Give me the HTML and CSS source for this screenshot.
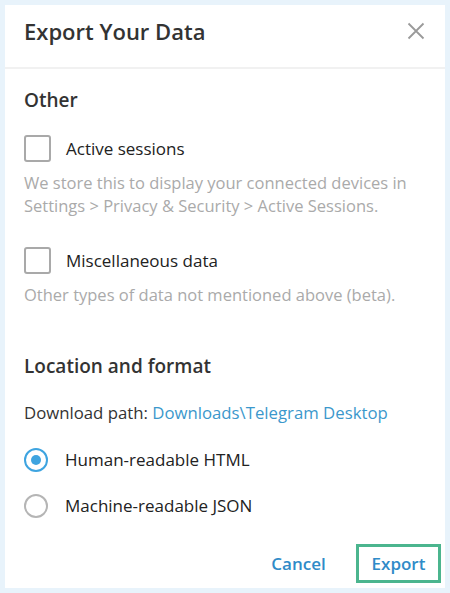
FILE: index.html
```html
<!DOCTYPE html>
<html>
<head>
<meta charset="utf-8">
<link rel="stylesheet" href="styles.css">
</head>
<body>
<div class="dialog">
  <div class="header">
    <h1 class="title">Export Your Data</h1>
    <svg class="close" width="18" height="18" viewBox="0 0 18 18"><path d="M1.5 1.5 L16.5 16.5 M16.5 1.5 L1.5 16.5" stroke="#9a9a9a" stroke-width="1.8" fill="none"/></svg>
  </div>
  <div class="body">
    <h2 class="section">Other</h2>
    <div class="option">
      <span class="checkbox"></span>
      <span class="label">Active sessions</span>
    </div>
    <p class="desc">We store this to display your connected devices in Settings &gt; Privacy &amp; Security &gt; Active Sessions.</p>
    <div class="option opt2">
      <span class="checkbox"></span>
      <span class="label">Miscellaneous data</span>
    </div>
    <p class="desc">Other types of data not mentioned above (beta).</p>

    <h2 class="section sec2">Location and format</h2>
    <div class="path">Download path: <span class="link">Downloads\Telegram Desktop</span></div>
    <div class="option radio-row">
      <span class="radio on"></span>
      <span class="label">Human-readable HTML</span>
    </div>
    <div class="option radio-row r2">
      <span class="radio"></span>
      <span class="label">Machine-readable JSON</span>
    </div>
  </div>
  <div class="footer">
    <button class="btn">Cancel</button>
    <button class="btn primary">Export</button>
  </div>
</div>
</body>
</html>
```
FILE: styles.css
```css
html, body { margin: 0; padding: 0; }
body {
  width: 450px;
  height: 593px;
  box-sizing: border-box;
  padding: 5px;
  background: #e8f3fb;
  font-family: "Open Sans", "Noto Sans", sans-serif;
  color: #222;
}
.dialog {
  background: #fff;
  height: 583px;
  display: flex;
  flex-direction: column;
}
.header {
  height: 64px;
  border-bottom: 2px solid #f1f1f1;
  display: flex;
  align-items: center;
  justify-content: space-between;
  padding: 0 20px 11px 19px;
  box-sizing: border-box;
  flex: none;
}
.title {
  margin: 0;
  font-size: 22px;
  font-weight: 600;
  color: #333;
}
.body {
  padding: 18px 19px 0 19px;
  flex: 1;
}
.section {
  margin: 0;
  font-size: 19px;
  font-weight: 600;
  color: #333;
  line-height: 26px;
}
.option {
  display: flex;
  align-items: center;
  margin-top: 22px;
  height: 27px;
}
.opt2 { margin-top: 30px; }
.checkbox {
  width: 23px;
  height: 23px;
  border: 2px solid #a9a9a9;
  border-radius: 3px;
  flex: none;
}
.label {
  margin-left: 15px;
  font-size: 17px;
  color: #222;
}
.desc {
  margin: 9px 0 0 0;
  font-size: 16.5px;
  line-height: 23px;
  color: #aaa;
}
.sec2 { margin-top: 47px; }
.path {
  margin-top: 22px;
  font-size: 16.75px;
  line-height: 23px;
  color: #333;
}
.link { color: #3b98cc; }
.radio-row { margin-top: 22px; }
.r2 { margin-top: 19px; }
.radio {
  width: 20px;
  height: 20px;
  border: 2px solid #b5b5b5;
  border-radius: 50%;
  flex: none;
  position: relative;
}
.radio.on { border-color: #3ea4e0; }
.radio.on::after {
  content: "";
  position: absolute;
  left: 5px; top: 5px;
  width: 10px; height: 10px;
  border-radius: 50%;
  background: #3ea4e0;
}
.radio-row .label { margin-left: 17px; }
.footer {
  display: flex;
  justify-content: flex-end;
  align-items: center;
  gap: 15px;
  padding: 0 4px 5px 0;
  flex: none;
}
.btn {
  font-family: "Open Sans", "Noto Sans", sans-serif;
  font-size: 17px;
  font-weight: 600;
  color: #2f8bc8;
  background: #fff;
  border: 3px solid transparent;
  padding: 0;
  width: 85px;
  height: 39px;
  text-align: center;
}
.btn.primary { border-color: #4bb58e; }
```
